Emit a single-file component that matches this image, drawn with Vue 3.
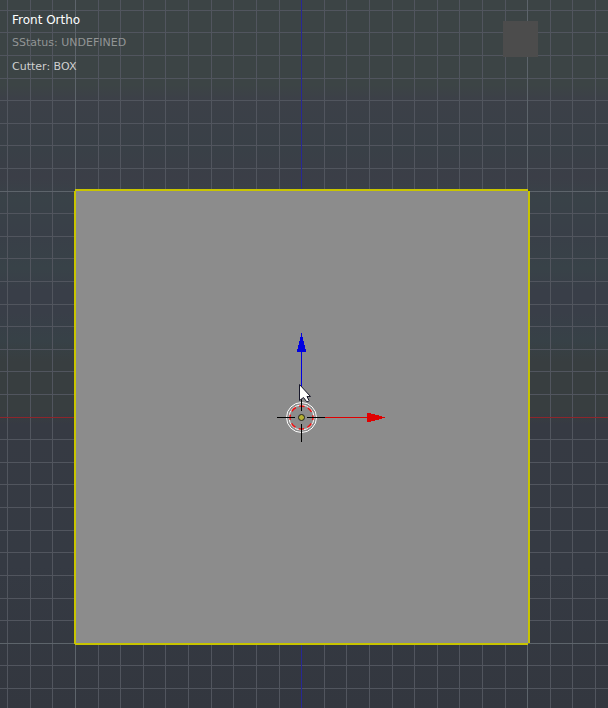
<script setup>
const step = 22.605
const lines = Array.from({ length: 61 }, (_, i) => i - 30)
  .filter((k) => k !== 0)
  .map((k) => ({
    k,
    x: Math.floor(301.62 + k * step),
    y: Math.floor(417.17 + k * step),
    major: k % 10 === 0,
  }))
  .sort((a, b) => a.major - b.major)
</script>

<template>
  <main class="viewport">
    <svg class="scene" aria-hidden="true" shape-rendering="crispEdges">
      <g v-for="l in lines" :key="l.k" :class="l.major ? 'major' : 'minor'">
        <rect :x="l.x" y="0" width="1" height="100%" />
        <rect x="0" :y="l.y" width="100%" height="1" />
      </g>
      <rect class="axis-x" x="0" y="417" width="100%" height="1" />
      <rect class="axis-z" x="301" y="0" width="1" height="100%" />

      <rect class="face" x="75" y="190" width="453" height="453" />
      <g class="edge">
        <rect x="75" y="189" width="453" height="2" />
        <rect x="74" y="191" width="2" height="453" />
        <rect x="528" y="191" width="2" height="452" />
        <rect x="75" y="643" width="453" height="2" />
      </g>

      <rect class="nav" x="503" y="21" width="35" height="36" />

      <g class="blue">
        <rect x="301" y="345" width="1" height="48" />
        <path d="M301 333h1v4h1v4h1v4h1v4h1v3h-9v-3h1v-4h1v-4h1v-4h1z" />
      </g>
      <g class="red">
        <rect x="325" y="417" width="45" height="1" />
        <path d="M367 413h4v1h4v1h4v1h3v1h3v1h-3v1h-3v1h-4v1h-4v1h-4z" />
      </g>
      <g class="rings" shape-rendering="auto">
        <circle class="white" cx="301.5" cy="417.5" r="15" />
        <circle class="white" cx="301.5" cy="417.5" r="12.500" />
        <circle class="dash" cx="301.5" cy="417.5" r="11.500" />
      </g>
      <g class="black">
        <rect x="277" y="417" width="18" height="1" />
        <rect x="307" y="417" width="18" height="1" />
        <rect x="301" y="393" width="1" height="18" />
        <rect x="301" y="424" width="1" height="18" />
      </g>
      <circle class="origin" cx="301.5" cy="417.5" r="3" shape-rendering="auto" />
      <path class="pointer" shape-rendering="auto" d="M299.5 384.5v16l4-3 3 4q2 1 2.500-1l-2-4h3.500z" />
    </svg>

    <header class="info">
      <h1>Front Ortho</h1>
      <p class="status">SStatus: UNDEFINED</p>
      <p class="cutter">Cutter: BOX</p>
    </header>
  </main>
</template>

<style>
body {
  margin: 0;
}
</style>

<style scoped>
.viewport {
  position: relative;
  min-height: 100vh;
  overflow: hidden;
  background: linear-gradient(#3c4445 0 12%, #3c4048 14%, #394047 21%, #3b3e47 25%, #394248 28%, #393f48 33%, #384248 38%, #393e48 41%, #393e48 44%, #374147 48%, #383e40 51%, #383e40 58%, #363a43 60%, #353a43 80%, #33373f);
}
.scene {
  position: absolute;
  inset: 0;
  width: 100%;
  height: 100%;
}
.minor {
  fill: #51555e;
}
.major {
  fill: #5d646b;
}
.axis-x {
  fill: #8e262b;
}
.axis-z {
  fill: #272895;
}
.face {
  fill: #8c8c8c;
}
.edge {
  fill: #c8c400;
}
.nav {
  fill: #4c4c4c;
}
.blue {
  fill: #0000e0;
}
.red {
  fill: #e00000;
}
.rings {
  fill: none;
  stroke-width: 1;
}
.white {
  stroke: #fff;
}
.dash {
  stroke: #f01010;
  stroke-width: 1.5;
  stroke-dasharray: 5.500 3.532;
  stroke-dashoffset: 2.750;
}
.black {
  fill: #000;
}
.origin {
  fill: #b5b032;
  stroke: #222;
}
.pointer {
  fill: #fff;
  stroke: #17172a;
}
.info {
  position: relative;
  padding: 12px;
  font-family: "DejaVu Sans", sans-serif;
}
h1,
p {
  margin: 0;
  font-weight: 400;
  line-height: 16px;
}
h1 {
  font-size: 12px;
  color: #fff;
}
p {
  font-size: 11px;
}
.status {
  margin-top: 7px;
  color: #929595;
}
.cutter {
  margin-top: 8px;
  color: #d0d0d0;
}
</style>
